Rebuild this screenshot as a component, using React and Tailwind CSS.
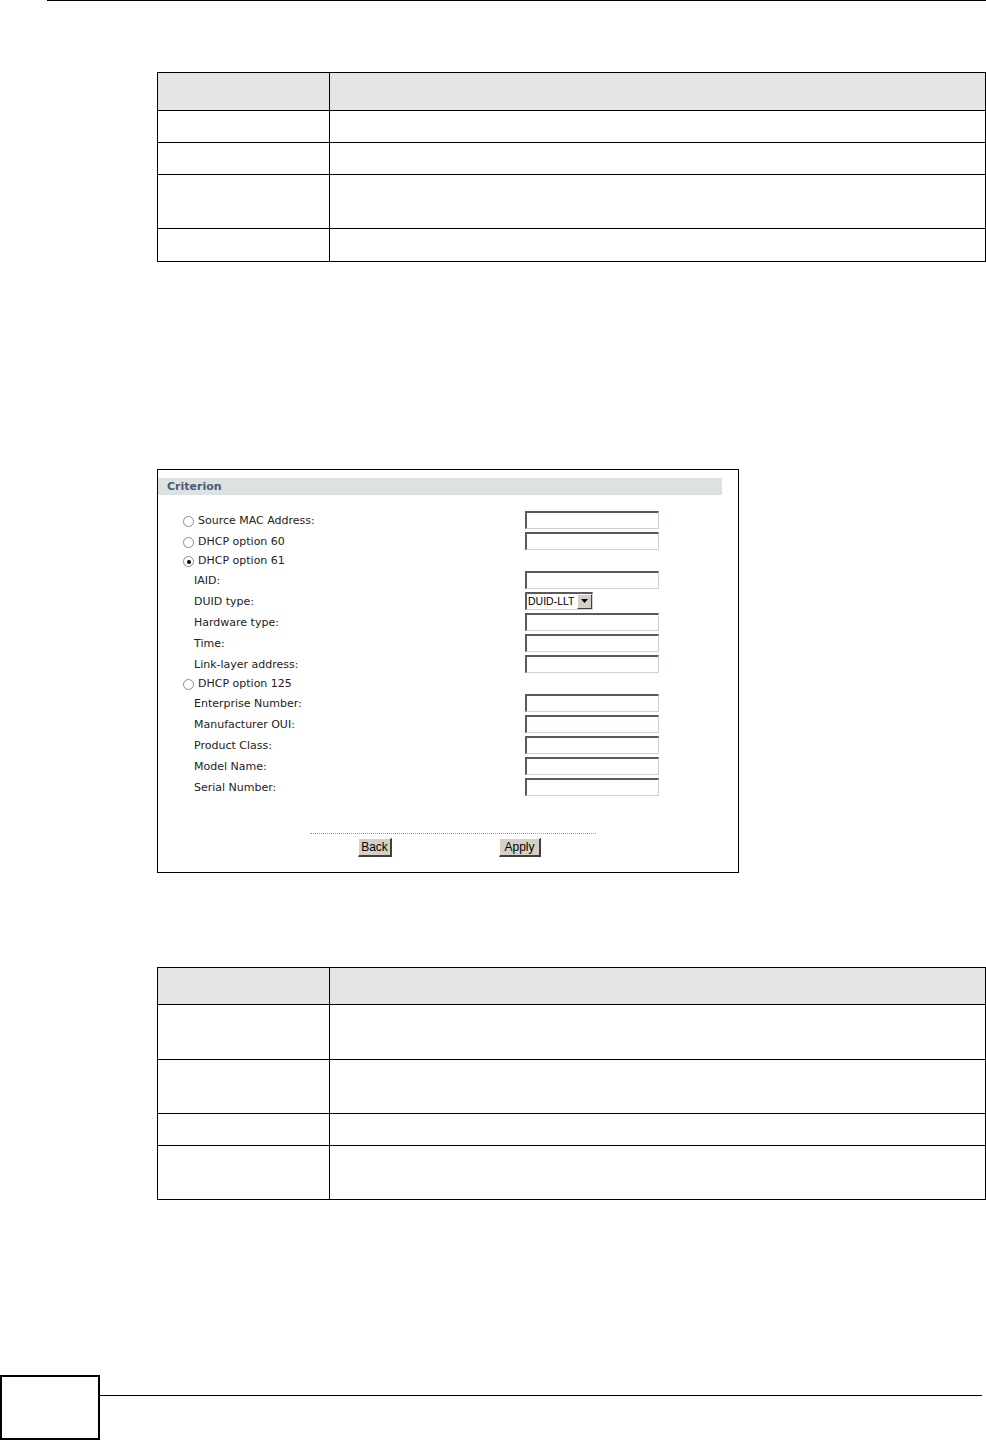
const topRows = [37, 32, 32, 54, 33];
const bottomRows = [36, 55, 54, 32, 54];

function DocTable({ rows }) {
  return (
    <div className="ml-[157px] w-[829px] border border-black">
      {rows.map((h, i) => (
        <div
          key={i}
          className={`flex ${i > 0 ? 'border-t border-black' : ''} ${i === 0 ? 'bg-[#e5e5e5]' : 'bg-white'}`}
          style={{ height: h }}
        >
          <div className="w-[172px] border-r border-black" />
          <div className="flex-1" />
        </div>
      ))}
    </div>
  );
}

function Radio({ checked }) {
  return (
    <span className="relative inline-flex w-[11px] h-[11px] rounded-full border border-[#8c8c8c] bg-white items-center justify-center">
      {checked && <span className="w-[4px] h-[4px] rounded-full bg-black" />}
    </span>
  );
}

function TextInput() {
  return (
    <div className="w-[134px] h-[18px] bg-white border-t-2 border-l-2 border-t-[#5a5a5a] border-l-[#5a5a5a] border-b border-r border-b-[#d4d0c8] border-r-[#d4d0c8]" />
  );
}

function Select() {
  return (
    <div className="w-[68px] h-[18px] flex bg-white border-t-2 border-l-2 border-t-[#5a5a5a] border-l-[#5a5a5a] border-b border-r border-b-[#d4d0c8] border-r-[#d4d0c8]">
      <span className="flex-1 pl-[1px] whitespace-nowrap overflow-hidden text-[10.5px] leading-[15px] text-black font-['Liberation_Sans',sans-serif]">DUID-LLT</span>
      <span className="w-[15px] h-full flex items-center justify-center bg-[#d4d0c8] border-t border-l border-t-white border-l-white border-b border-r border-b-[#404040] border-r-[#404040]">
        <svg width="7" height="4" viewBox="0 0 7 4">
          <path d="M0 0h7L3.5 4z" fill="#000" />
        </svg>
      </span>
    </div>
  );
}

const formRows = [
  { label: 'Source MAC Address:', radio: true, h: 21, field: 'input' },
  { label: 'DHCP option 60', radio: true, h: 21, field: 'input' },
  { label: 'DHCP option 61', radio: true, checked: true, h: 18 },
  { label: 'IAID:', h: 21, field: 'input' },
  { label: 'DUID type:', h: 21, field: 'select' },
  { label: 'Hardware type:', h: 21, field: 'input' },
  { label: 'Time:', h: 21, field: 'input' },
  { label: 'Link-layer address:', h: 21, field: 'input' },
  { label: 'DHCP option 125', radio: true, h: 18 },
  { label: 'Enterprise Number:', h: 21, field: 'input' },
  { label: 'Manufacturer OUI:', h: 21, field: 'input' },
  { label: 'Product Class:', h: 21, field: 'input' },
  { label: 'Model Name:', h: 21, field: 'input' },
  { label: 'Serial Number:', h: 21, field: 'input' },
];

function Button({ children, className }) {
  return (
    <button
      className={`${className} block h-[19px] bg-[#d4d0c8] border-t border-l border-t-white border-l-white border-b-2 border-r-2 border-b-[#404040] border-r-[#404040] text-[12px] leading-none text-black font-['Liberation_Sans',sans-serif]`}
    >
      {children}
    </button>
  );
}

function CriterionPanel() {
  return (
    <div className="ml-[157px] mt-[207px] w-[582px] h-[404px] border border-black bg-white flex flex-col font-['DejaVu_Sans',sans-serif]">
      <div className="mt-[8px] w-[564px] h-[17px] bg-[#dce2e2] pl-[9px] pt-[2px] flex items-center text-[11px] font-bold text-[#4d5a78]">
        Criterion
      </div>
      <div className="mt-[14px] flex flex-col">
        {formRows.map((r) => (
          <div key={r.label} className="flex items-center" style={{ height: r.h }}>
            <div className="w-[367px] pt-[3px] flex items-center text-[11px] text-[#222]">
              {r.radio ? (
                <span className="ml-[25px] flex items-center gap-[4px]">
                  <Radio checked={r.checked} />
                  <span>{r.label}</span>
                </span>
              ) : (
                <span className="ml-[36px]">{r.label}</span>
              )}
            </div>
            {r.field === 'input' && <TextInput />}
            {r.field === 'select' && <Select />}
          </div>
        ))}
      </div>
      <div className="mt-[36px] ml-[152px] w-[286px] border-t border-dotted border-[#9a9a9a]" />
      <div className="mt-[4px] flex items-start">
        <Button className="ml-[200px] w-[34px]">Back</Button>
        <Button className="ml-[107px] w-[42px]">Apply</Button>
      </div>
    </div>
  );
}

export default function App() {
  return (
    <div className="w-[986px] h-[1440px] bg-white flex flex-col">
      <div className="ml-[47px] h-px bg-black" />
      <div className="mt-[71px]">
        <DocTable rows={topRows} />
      </div>
      <CriterionPanel />
      <div className="mt-[94px]">
        <DocTable rows={bottomRows} />
      </div>
      <div className="mt-auto h-[65px] flex">
        <div className="w-[100px] h-full border-2 border-black" />
        <div className="flex-1 pt-[20px] pr-[4px]">
          <div className="h-px bg-black" />
        </div>
      </div>
    </div>
  );
}
